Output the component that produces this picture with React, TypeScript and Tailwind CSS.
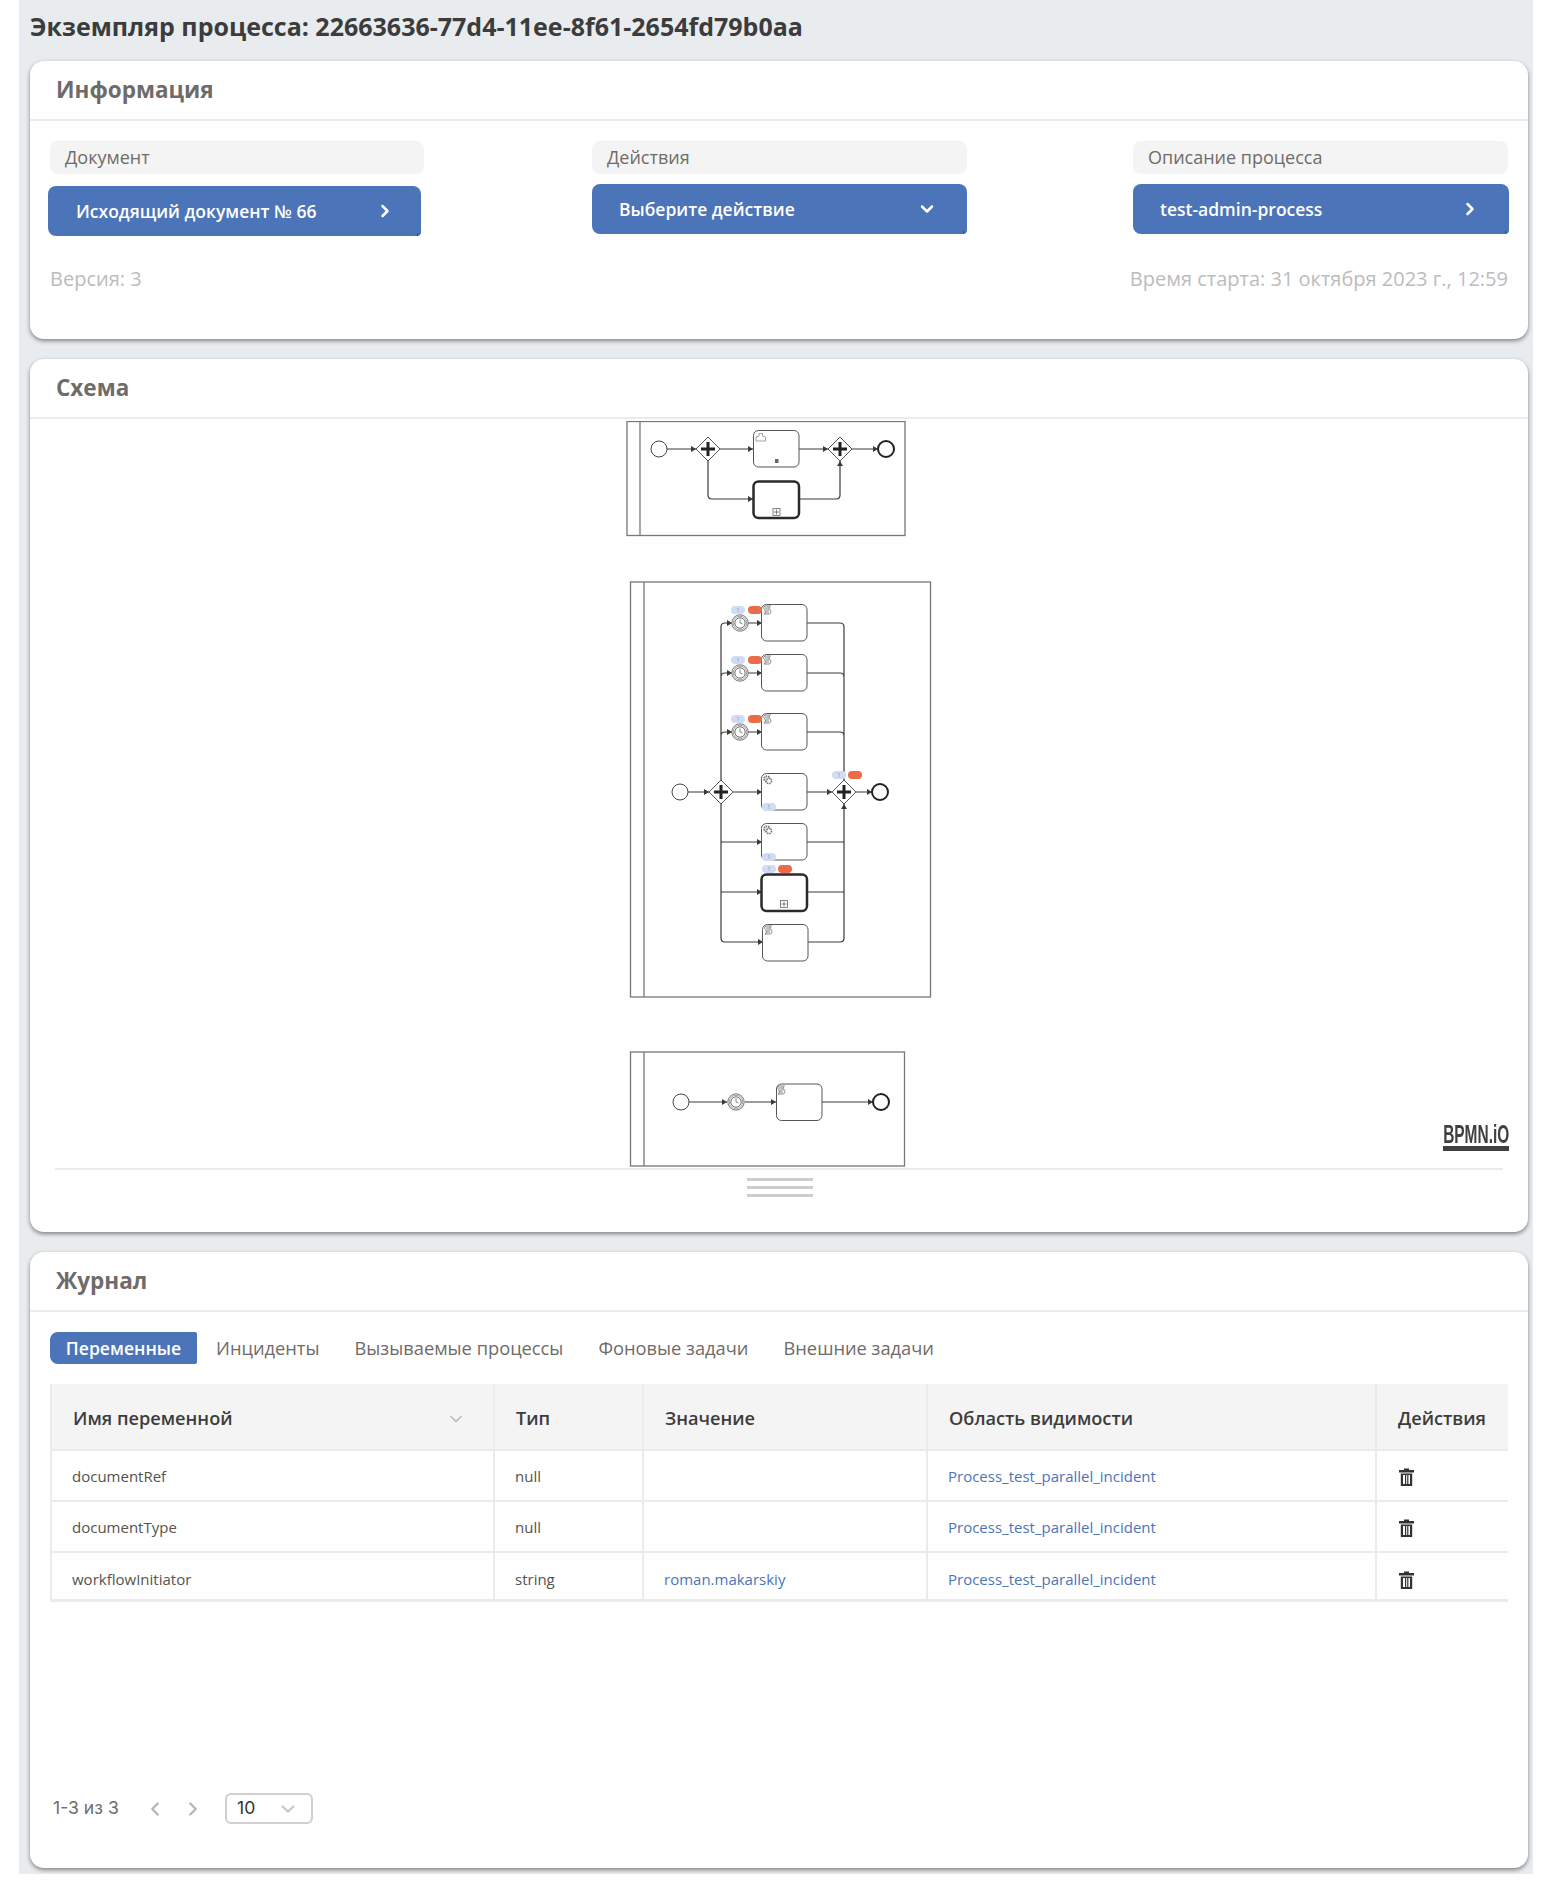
import { ChevronDown, ChevronLeft, ChevronRight } from "lucide-react";
import type { ReactNode } from "react";

const ROWS = [
  { name: "documentRef", type: "null", value: "" },
  { name: "documentType", type: "null", value: "" },
  { name: "workflowInitiator", type: "string", value: "roman.makarskiy" },
];

const TABS = ["Инциденты", "Вызываемые процессы", "Фоновые задачи", "Внешние задачи"];

const INK = "#3a3a3a";

function Card({ title, className, children }: { title: string; className: string; children: ReactNode }) {
  return (
    <section className={`rounded-[14px] bg-white shadow-[0_2px_4px_rgba(0,0,0,0.45)] ${className}`}>
      <h2 className="h-[60px] border-b-2 border-[#e8ecef] pl-[26px] pt-[13px] text-[22.5px] leading-[32px] font-bold text-[#6f6b68]">
        {title}
      </h2>
      {children}
    </section>
  );
}

function Label({ children }: { children: ReactNode }) {
  return (
    <div className="h-[33px] rounded-[8px] bg-[#f4f4f4] pl-[15px] text-[18px] leading-[33px] text-[#6f6b68]">
      {children}
    </div>
  );
}

function Flow({ d }: { d: string }) {
  return <path d={d} fill="none" stroke={INK} strokeWidth="1.2" />;
}

function Arrow({ x, y, dir = "right" }: { x: number; y: number; dir?: "right" | "up" }) {
  const points = dir === "right" ? `${x},${y} ${x - 5},${y - 3} ${x - 5},${y + 3}` : `${x},${y} ${x - 3},${y + 5} ${x + 3},${y + 5}`;
  return <polygon points={points} fill={INK} />;
}

function Gateway({ x, y }: { x: number; y: number }) {
  return (
    <g>
      <polygon points={`${x},${y - 12} ${x + 12},${y} ${x},${y + 12} ${x - 12},${y}`} fill="#fff" stroke="#555" strokeWidth="1" />
      <path d={`M${x - 7} ${y}H${x + 7}M${x} ${y - 7}V${y + 7}`} stroke="#222" strokeWidth="3" />
    </g>
  );
}

function Circle({ x, y, end }: { x: number; y: number; end?: boolean }) {
  return <circle cx={x} cy={y} r="8" fill="#fff" stroke={end ? "#222" : "#444"} strokeWidth={end ? 2 : 1} />;
}

function Timer({ x, y }: { x: number; y: number }) {
  return (
    <g fill="none">
      <circle cx={x} cy={y} r="8.2" fill="#fff" stroke="#555" strokeWidth="0.8" />
      <circle cx={x} cy={y} r="6.8" stroke="#777" strokeWidth="0.7" />
      <circle cx={x} cy={y} r="5.2" fill="#fff" stroke="#444" strokeWidth="0.8" />
      <path d={`M${x} ${y - 3.5}V${y}L${x + 2.5} ${y + 1}`} stroke="#555" strokeWidth="0.7" />
    </g>
  );
}

function Task({ x, y, thick, children }: { x: number; y: number; thick?: boolean; children?: ReactNode }) {
  return (
    <g>
      <rect x={x} y={y} width="45.5" height="36.5" rx="5" fill="#fff" stroke={thick ? "#2a2a2a" : "#555"} strokeWidth={thick ? 2.5 : 1} />
      {children}
    </g>
  );
}

function Script({ x, y }: { x: number; y: number }) {
  return (
    <path
      d={`M${x + 1} ${y}h5.5c-2 1.5-1.5 2.5-.5 3.5s1.5 3-.5 4.5h-5.5c2-1.5 1.5-3 .5-4.5s-1.5-2 .5-3.5zM${x + 1} ${y + 2}h4M${x + 1.5} ${y + 4}h4M${x + 1} ${y + 6}h4`}
      fill="none"
      stroke="#777"
      strokeWidth="0.9"
    />
  );
}

function Gear({ x, y }: { x: number; y: number }) {
  return (
    <g fill="none" stroke="#777">
      <circle cx={x} cy={y} r="2.8" strokeWidth="2" strokeDasharray="1.5 0.8" />
      <circle cx={x + 2} cy={y + 2} r="2.6" fill="#fff" strokeWidth="1.6" strokeDasharray="1.5 0.8" />
    </g>
  );
}

function SubMarker({ x, y }: { x: number; y: number }) {
  return (
    <g fill="none" stroke="#666" strokeWidth="0.8">
      <rect x={x - 3.5} y={y - 3.5} width="7" height="7" />
      <path d={`M${x - 2.5} ${y}H${x + 2.5}M${x} ${y - 2.5}V${y + 2.5}`} />
    </g>
  );
}

function Badge({ x, y, orange }: { x: number; y: number; orange?: boolean }) {
  return (
    <g>
      <rect x={x - 7} y={y - 4} width="14" height="8" rx="4" fill={orange ? "#ee6c45" : "#cfdcf3"} />
      <text x={x} y={y + 2} textAnchor="middle" fontSize="5" fontFamily="'Open Sans', sans-serif" fill="#8a8a8a">
        1
      </text>
    </g>
  );
}

function Pool({ x, y, w, h, lane }: { x: number; y: number; w: number; h: number; lane: number }) {
  return (
    <g fill="none" stroke="#777" strokeWidth="1.3">
      <rect x={x} y={y} width={w} height={h} />
      <path d={`M${lane} ${y}V${y + h}`} />
    </g>
  );
}

// coordinates are the page's, the canvas origin sits at (30, 421)
function BpmnCanvas() {
  return (
    <svg width="1498" height="747" viewBox="30 421 1498 747" className="block blur-[0.35px]">
      {/* first pool */}
      <Pool x={627} y={421.5} w={278} h={114} lane={640} />
      <Flow d="M667 449H696M720 449H753M799 449H828M852 449H878M708 461V495q0 4 4 4H753M800 499H836q4 0 4-4V461" />
      <Arrow x={696} y={449} />
      <Arrow x={753} y={449} />
      <Arrow x={828} y={449} />
      <Arrow x={878} y={449} />
      <Arrow x={753} y={499} />
      <Arrow x={840} y={461} dir="up" />
      <Circle x={659} y={449} />
      <Gateway x={708} y={449} />
      <Task x={753.5} y={430.5}>
        <path d="M756 441v-4l3-1v-2.5h3.5v2.5l3 1v4z" fill="#fff" stroke="#999" strokeWidth="0.9" />
        <rect x={775} y={459} width="3.5" height="4" fill="#666" />
      </Task>
      <Task x={753.5} y={481.5} thick>
        <SubMarker x={776.5} y={512} />
      </Task>
      <Gateway x={840} y={449} />
      <Circle x={886} y={449} end />

      {/* second pool */}
      <Pool x={630.5} y={582} w={300} h={415} lane={644} />
      <Flow d="M688 792H709M733 792H762M807 792H832M856 792H872M721 780V627q0-4 4-4H732M721 677q0-4 4-4H732M721 736q0-4 4-4H732M748 623H762M748 673H762M748 732H762" />
      <Flow d="M807 623H840q4 0 4 4V780M807 673H840q4 0 4 4M807 732H840q4 0 4 4M721 804V938q0 4 4 4H763M721 842H762M721 892H762M808 942H840q4 0 4-4V804M807 842H844M808 892H844" />
      {[623, 673, 732].map((y) => (
        <g key={y}>
          <Arrow x={732} y={y} />
          <Arrow x={762} y={y} />
          <Timer x={740} y={y} />
          <Task x={761.5} y={y - 18.5}>
            <Script x={764} y={y - 17} />
          </Task>
          <Badge x={738} y={y - 13} />
          <Badge x={755} y={y - 13} orange />
        </g>
      ))}
      <Arrow x={709} y={792} />
      <Arrow x={762} y={792} />
      <Arrow x={832} y={792} />
      <Arrow x={872} y={792} />
      <Arrow x={762} y={842} />
      <Arrow x={762} y={892} />
      <Arrow x={763} y={942} />
      <Arrow x={844} y={804} dir="up" />
      <Circle x={680} y={792} />
      <Gateway x={721} y={792} />
      <Gateway x={844} y={792} />
      <Circle x={880} y={792} end />
      <Badge x={839} y={775} />
      <Badge x={855} y={775} orange />
      <Task x={761.5} y={773.5}>
        <Gear x={767} y={779} />
        <Badge x={769} y={807} />
      </Task>
      <Task x={761.5} y={823.5}>
        <Gear x={767} y={829} />
        <Badge x={769} y={857} />
      </Task>
      <Task x={761.5} y={874.5} thick>
        <SubMarker x={784} y={904} />
      </Task>
      <Badge x={769} y={869} />
      <Badge x={785} y={869} orange />
      <Task x={762.5} y={924.5}>
        <Script x={765} y={926} />
      </Task>

      {/* third pool */}
      <Pool x={630.5} y={1052} w={274} h={114} lane={644} />
      <Flow d="M689 1102H727M745 1102H776M822 1102H873" />
      <Arrow x={727} y={1102} />
      <Arrow x={776} y={1102} />
      <Arrow x={873} y={1102} />
      <Circle x={681} y={1102} />
      <Timer x={736} y={1102} />
      <Task x={776.5} y={1084}>
        <Script x={778} y={1086} />
      </Task>
      <Circle x={881} y={1102} end />
    </svg>
  );
}

function TrashIcon() {
  return (
    <svg width="15" height="18" viewBox="0 0 15 18" className="block">
      <path d="M5 2V0.5H10V2H15V4.5H0V2Z" fill="#333" />
      <path d="M1.8 5.5H13.2V18H1.8ZM4 7V16H11V7Z" fill="#333" fillRule="evenodd" />
      <path d="M6 7H7.2V16H6ZM8.2 7H9.4V16H8.2Z" fill="#333" />
    </svg>
  );
}

const HEAD = "flex h-[67px] items-center border-b-2 border-[#e8ecef] bg-[#f4f4f4] pt-[4px] pl-[21px] text-[18.2px] font-semibold text-[#3c3c3c]";
const BLUE_BTN = "relative flex h-[50px] items-center justify-between rounded-[8px] rounded-br-[4px] bg-[#4c74b8] text-[17.5px] font-semibold text-white";

function Sliver() {
  return <span className="absolute right-[3px] bottom-0 h-[3px] w-[1px] bg-[#d0102a]" />;
}

export default function App() {
  return (
    <div className="bg-white font-['Open_Sans',sans-serif]">
      <div className="ml-[19px] w-[1514px] bg-[#e8ecef] pr-[5px] pb-[6px] pl-[11px]">
        <h1 className="h-[61px] pt-[9px] text-[25px] leading-[34px] font-bold text-[#3c3c3c]">
          Экземпляр процесса: 22663636-77d4-11ee-8f61-2654fd79b0aa
        </h1>

        <div className="flex flex-col gap-[20px]">
          <Card title="Информация" className="h-[278px]">
            <div className="flex px-[20px] pt-[20px]">
              <div className="w-[374px]">
                <Label>Документ</Label>
                <button className={`${BLUE_BTN} mt-[12px] -ml-[2px] w-[373px] pr-[26px] pl-[28px]`}>
                  Исходящий документ № 66
                  <ChevronRight size={20} strokeWidth={3} />
                  <Sliver />
                </button>
              </div>
              <div className="ml-[168px] w-[375px]">
                <Label>Действия</Label>
                <button className={`${BLUE_BTN} mt-[10px] w-[375px] pr-[30px] pl-[27px]`}>
                  Выберите действие
                  <ChevronDown size={20} strokeWidth={3} />
                  <Sliver />
                </button>
              </div>
              <div className="ml-auto w-[375px]">
                <Label>Описание процесса</Label>
                <button className={`${BLUE_BTN} mt-[10px] w-[376px] pr-[29px] pl-[27px]`}>
                  test-admin-process
                  <ChevronRight size={20} strokeWidth={3} />
                  <Sliver />
                </button>
              </div>
            </div>
            <div className="flex justify-between px-[20px] pt-[29px] text-[20px] leading-[28px] text-[#bcbcbc]">
              <span>Версия: 3</span>
              <span>Время старта: 31 октября 2023 г., 12:59</span>
            </div>
          </Card>

          <Card title="Схема" className="h-[873px]">
            <div className="relative pt-[2px]">
              <BpmnCanvas />
              <div className="absolute right-[19px] bottom-[17px] flex flex-col items-end">
                <span className="origin-right scale-x-[0.594] font-['Liberation_Sans',sans-serif] text-[26px] leading-[20px] font-bold text-[#404040]">
                  BPMN.iO
                </span>
                <div className="mt-[2px] h-[5px] w-[66px] bg-[#404040]" />
              </div>
            </div>
            <div className="mx-[25px] h-[2px] bg-[#e8ecef]" />
            <div className="mt-[8px] ml-[717px] flex w-[66px] flex-col gap-[5px]">
              <div className="h-[3px] bg-[#cccccc]" />
              <div className="h-[3px] bg-[#cccccc]" />
              <div className="h-[3px] bg-[#cccccc]" />
            </div>
          </Card>

          <Card title="Журнал" className="h-[616px]">
            <div className="px-[20px] pt-[20px]">
              <div className="flex h-[32px] items-center text-[18.3px] text-[#6f6b68]">
                <div className="h-[32px] w-[147px] rounded-l-[8px] rounded-r-[2px] bg-[#4c74b8] text-center text-[17.6px] leading-[32px] font-semibold text-white">
                  Переменные
                </div>
                <div className="ml-[19px] flex gap-[35px]">
                  {TABS.map((tab) => (
                    <span key={tab}>{tab}</span>
                  ))}
                </div>
              </div>

              <div className="mt-[20px] grid grid-cols-[443px_149px_284px_449px_131px] border-b-[3px] border-l-2 border-[#e8ecef]">
                <div className={`${HEAD} justify-between border-r-2 pr-[27px]`}>
                  Имя переменной
                  <ChevronDown size={20} strokeWidth={2} className="text-[#bcbcbc]" />
                </div>
                <div className={`${HEAD} border-r-2`}>Тип</div>
                <div className={`${HEAD} border-r-2`}>Значение</div>
                <div className={`${HEAD} border-r-2`}>Область видимости</div>
                <div className={HEAD}>Действия</div>
                {ROWS.map((row, idx) => {
                  const rowCls = idx < 2 ? "h-[51px] border-b-2 pt-[2px]" : "h-[46px] pt-[7px]";
                  return (
                    <div key={row.name} className="contents">
                      <div className={`flex items-center border-r-2 border-[#e8ecef] pl-[20px] text-[15px] text-[#55524f] ${rowCls}`}>
                        {row.name}
                      </div>
                      <div className={`flex items-center border-r-2 border-[#e8ecef] pl-[20px] text-[15px] text-[#55524f] ${rowCls}`}>
                        {row.type}
                      </div>
                      <div className={`flex items-center border-r-2 border-[#e8ecef] pl-[20px] text-[15px] text-[#4c74b8] ${rowCls}`}>
                        {row.value}
                      </div>
                      <div className={`flex items-center border-r-2 border-[#e8ecef] pl-[20px] text-[15px] text-[#4c74b8] ${rowCls}`}>
                        Process_test_parallel_incident
                      </div>
                      <div className={`flex items-center border-[#e8ecef] pl-[22px] ${rowCls}`}>
                        <TrashIcon />
                      </div>
                    </div>
                  );
                })}
              </div>

              <div className="mt-[191px] flex items-center pl-[3px] font-['Inter',sans-serif] text-[17.6px] text-[#6f6b68]">
                <span className="w-[91px]">1-3 из 3</span>
                <ChevronLeft size={22} strokeWidth={2.5} className="text-[#b5b5b5]" />
                <ChevronRight size={22} strokeWidth={2.5} className="ml-[16px] text-[#b5b5b5]" />
                <div className="ml-[21px] flex h-[31px] w-[88px] items-center justify-between rounded-[6px] border-2 border-[#cfcfcf] pr-[12px] pl-[10px] text-[#333]">
                  10
                  <ChevronDown size={22} strokeWidth={2} className="text-[#c4c4c4]" />
                </div>
              </div>
            </div>
          </Card>
        </div>
      </div>
    </div>
  );
}
